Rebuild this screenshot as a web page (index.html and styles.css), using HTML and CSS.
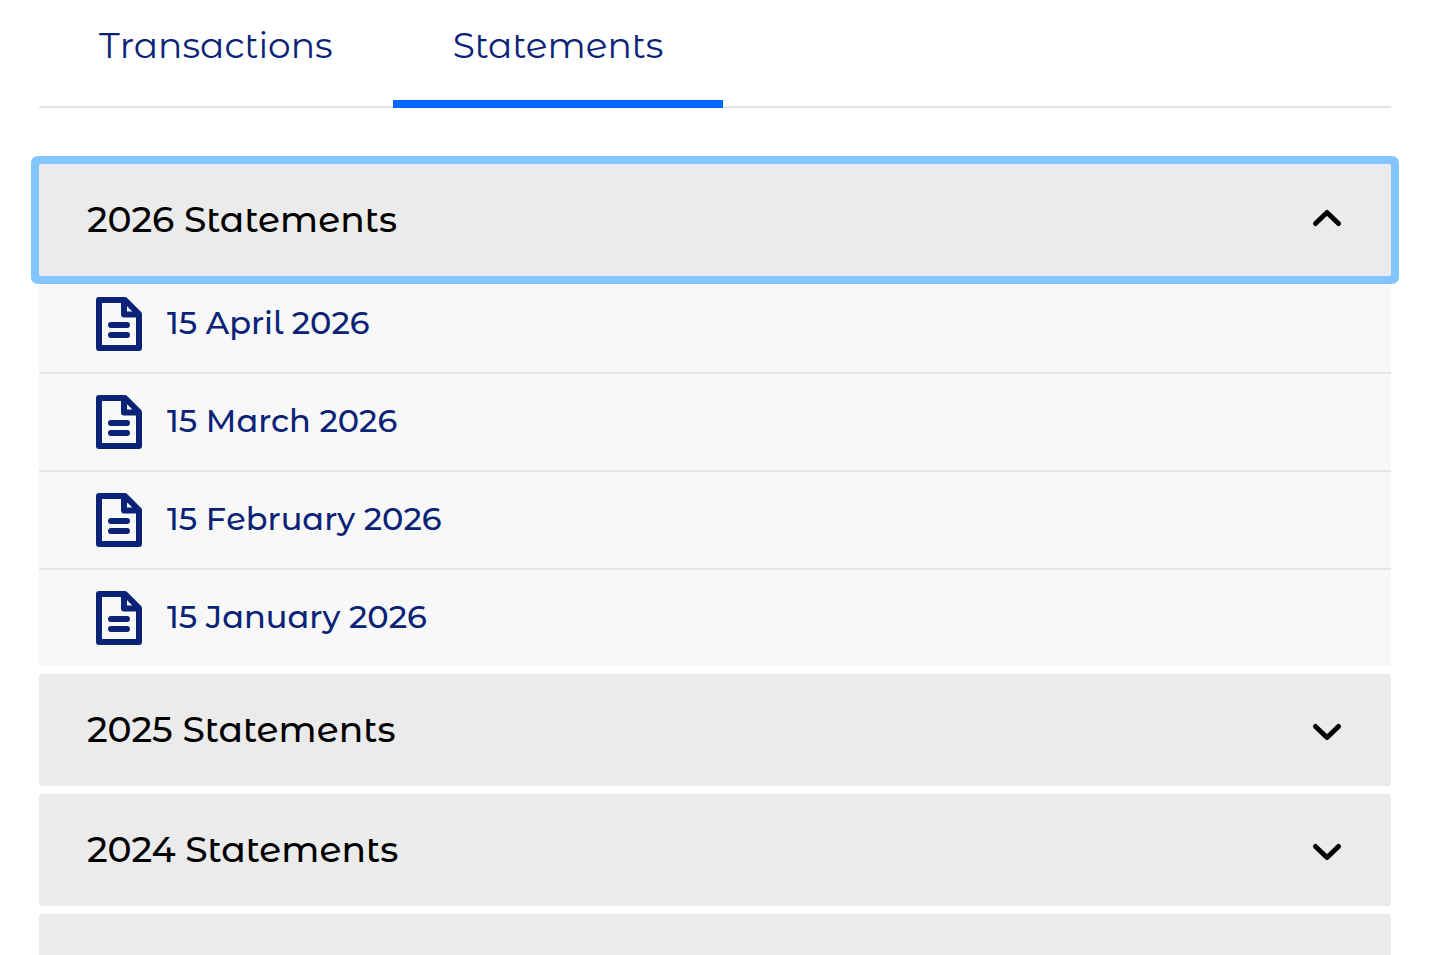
FILE: index.html
```html
<!DOCTYPE html>
<html lang="en">
<head>
    <meta charset="UTF-8">
    <meta name="viewport" content="width=device-width, initial-scale=1.0">
    <title>Statements</title>
    <link rel="stylesheet" href="styles.css">
</head>
<body>
    <svg class="sprite" aria-hidden="true">
        <symbol id="icon-document" viewBox="0 0 64 64">
            <path d="M38 8H12V56H52V22Z M37 8V22.500H52 M24 33H40 M24 43H40"/>
        </symbol>
        <symbol id="icon-chevron" viewBox="0 0 48 48">
            <path d="M12.500 20.500L24 31.500L35.500 20.500"/>
        </symbol>
    </svg>

    <main class="container">
        <nav class="tabs">
            <a class="tab" href="#transactions">T<span class="alt">ransactions</span></a>
            <a class="tab active alt" href="#statements" aria-current="page">Statements</a>
        </nav>

        <div class="accordion">
            <section>
                <button class="year focused" type="button" aria-expanded="true" aria-controls="list-2026">
                    <span class="label alt">2026 Statements</span>
                    <svg class="chevron"><use href="#icon-chevron"/></svg>
                </button>
                <ul class="statements" id="list-2026">
                    <li><a href="#"><svg class="document"><use href="#icon-document"/></svg><span class="label">15 A<span class="alt">pril</span> 2026</span></a></li>
                    <li><a href="#"><svg class="document"><use href="#icon-document"/></svg><span class="label">15 M<span class="alt">arch</span> 2026</span></a></li>
                    <li><a href="#"><svg class="document"><use href="#icon-document"/></svg><span class="label">15 F<span class="alt">ebruar</span>y 2026</span></a></li>
                    <li><a href="#"><svg class="document"><use href="#icon-document"/></svg><span class="label">15 J<span class="alt">anuar</span>y 2026</span></a></li>
                </ul>
            </section>
            <section>
                <button class="year" type="button" aria-expanded="false">
                    <span class="label alt">2025 Statements</span>
                    <svg class="chevron"><use href="#icon-chevron"/></svg>
                </button>
            </section>
            <section>
                <button class="year" type="button" aria-expanded="false">
                    <span class="label alt">2024 Statements</span>
                    <svg class="chevron"><use href="#icon-chevron"/></svg>
                </button>
            </section>
            <section>
                <button class="year" type="button" aria-expanded="false">
                    <span class="label alt">2023 Statements</span>
                    <svg class="chevron"><use href="#icon-chevron"/></svg>
                </button>
            </section>
        </div>
    </main>
</body>
</html>
```

FILE: styles.css
```css
* { box-sizing: border-box; }

body {
    margin: 0;
    background: #fff;
    color: #000;
    font-family: Montserrat, Inter, sans-serif;
}

/* alternate lowercase letterforms */
.alt { font-family: "Montserrat Alternates", Montserrat, Inter, sans-serif; }

.sprite { display: none; }

.container { padding: 0 39px; }

/* Tabs */
.tabs {
    display: flex;
    border-bottom: 2px solid #e4e4e4;
}

.tab {
    margin-bottom: -2px;
    padding: 21px 60px 31px;
    border-bottom: 8px solid transparent;
    color: #0a2377;
    font-size: 36px;
    font-weight: 400;
    line-height: 48px;
    text-decoration: none;
}

.tab.active { border-bottom-color: #006aff; }

/* Accordion */
.accordion {
    display: flex;
    flex-direction: column;
    gap: 8px;
    margin-top: 56px;
}

.year {
    display: flex;
    align-items: center;
    justify-content: space-between;
    width: 100%;
    padding: 32px 40px 32px 48px;
    border: none;
    border-radius: 2px;
    background: #ebebeb;
    color: #000;
    font-family: inherit;
    font-size: 36px;
    font-weight: 500;
    line-height: 44px;
    text-align: left;
    cursor: pointer;
}

.year.focused,
.year:focus-visible {
    position: relative;
    outline: none;
    box-shadow: 0 0 0 8px #82c5ff;
}

.label { padding-bottom: 2px; }

.chevron,
.document {
    flex: none;
    fill: none;
    stroke: currentColor;
    stroke-linecap: round;
    stroke-linejoin: round;
}

.chevron {
    width: 48px;
    height: 48px;
    stroke-width: 5px;
}

.year[aria-expanded="true"] .chevron { transform: rotate(180deg); }

.statements {
    margin: 0;
    padding: 0;
    background: #f8f8f8;
    list-style: none;
}

.statements li + li { border-top: 2px solid #e4e4e4; }

.statements a {
    display: flex;
    align-items: center;
    gap: 16px;
    padding: 16px 48px;
    color: #0a2377;
    font-size: 32px;
    font-weight: 500;
    line-height: 40px;
    text-decoration: none;
}

.document {
    width: 64px;
    height: 64px;
    stroke-width: 6px;
}
```
